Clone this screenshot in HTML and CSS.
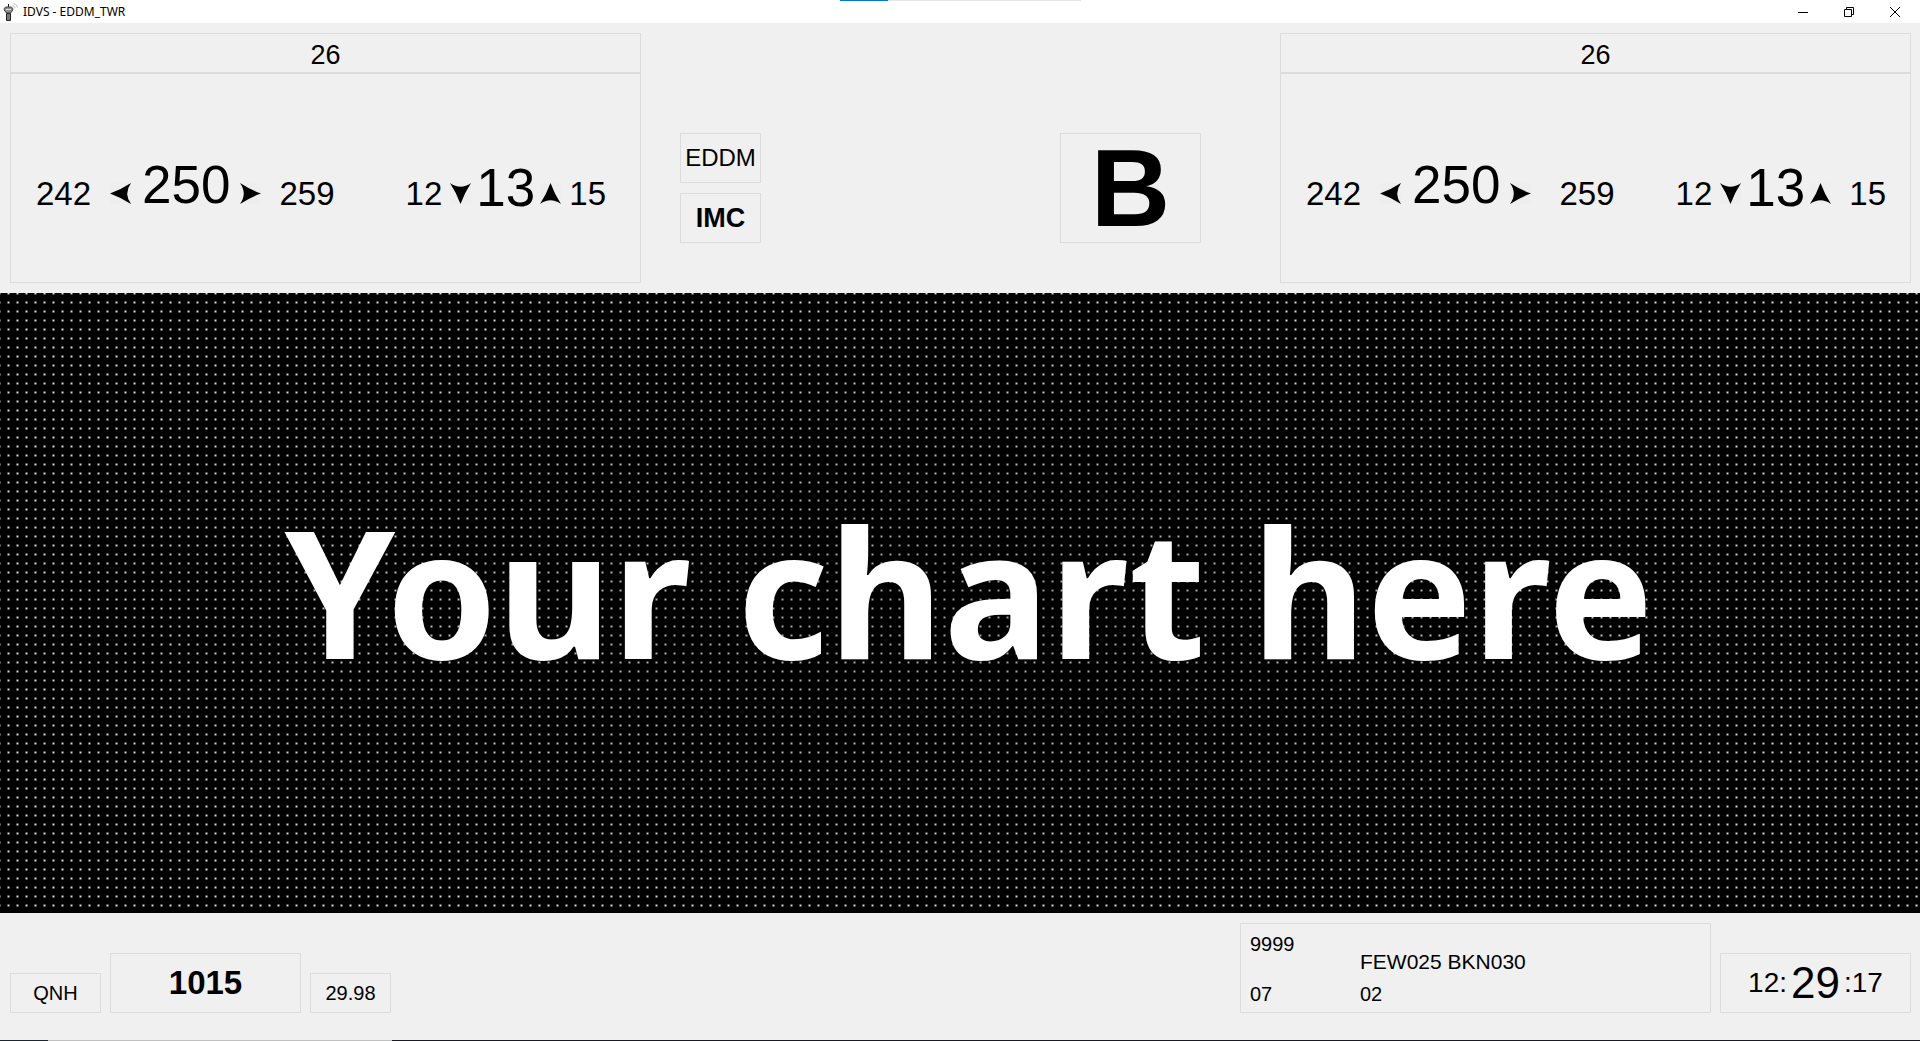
FILE: index.html
```
<!DOCTYPE html>
<html lang="en">
<head>
<meta charset="utf-8">
<meta name="viewport" content="width=device-width, initial-scale=1">
<title>IDVS - EDDM_TWR</title>
<link rel="stylesheet" href="styles.css">
</head>
<body>
<svg width="0" height="0" class="symbols" aria-hidden="true">
  <symbol id="arrow" viewBox="0 0 21 21"><path d="M0 10.500 Q11 6.500 21 0 Q13.500 10.500 21 21 Q11 14.500 0 10.500z"/></symbol>
</svg>

<header class="titlebar">
  <svg class="app-icon" width="16" height="18" viewBox="0 0 16 18" aria-hidden="true">
    <path d="M5 1h1v3H5z" fill="#111"/>
    <path d="M2.500 4h6l1.500 2-1 2.500L7 10H4L2 8.500 1 6z" fill="#8c8c8c" stroke="#444"/>
    <path d="M3 6.500h5" stroke="#ddd"/>
    <path d="M3.500 10.500h4v7h-4z" fill="#777" stroke="#222"/>
    <path d="M9.500 2.500q2 0 2.500 2.500M10.500 .5q3.500 .5 4 4" fill="none" stroke="#bbb"/>
  </svg>
  <h1 class="window-title">IDVS - EDDM_TWR</h1>
  <div class="window-controls">
    <button type="button" class="window-button" aria-label="Minimize"><svg width="10" height="10" viewBox="0 0 10 10"><path d="M0 5.500h10"/></svg></button>
    <button type="button" class="window-button" aria-label="Restore"><svg width="10" height="10" viewBox="0 0 10 10"><path d="M.5 2.500h7v7h-7zM2.500 2.500v-2h7v7h-2"/></svg></button>
    <button type="button" class="window-button" aria-label="Close"><svg width="10" height="10" viewBox="0 0 10 10"><path d="M0 0l10 10M10 0L0 10"/></svg></button>
  </div>
  <div class="load-strip"></div>
</header>

<section class="overview">
  <article class="runway">
    <h2 class="runway-name">26</h2>
    <div class="wind">
      <div class="wind-group">
        <span class="reading">242</span>
        <svg class="arrow arrow-left"><use href="#arrow"/></svg>
        <span class="reading direction">250</span>
        <svg class="arrow arrow-right"><use href="#arrow"/></svg>
        <span class="reading upper">259</span>
      </div>
      <div class="wind-group speed-group">
        <span class="reading">12</span>
        <svg class="arrow arrow-down"><use href="#arrow"/></svg>
        <span class="reading speed">13</span>
        <svg class="arrow arrow-up"><use href="#arrow"/></svg>
        <span class="reading">15</span>
      </div>
    </div>
  </article>

  <div class="station">
    <div class="station-state">
      <div class="box airport">EDDM</div>
      <div class="box conditions">IMC</div>
    </div>
    <div class="box atis">B</div>
  </div>

  <article class="runway runway-wide">
    <h2 class="runway-name">26</h2>
    <div class="wind">
      <div class="wind-group">
        <span class="reading">242</span>
        <svg class="arrow arrow-left"><use href="#arrow"/></svg>
        <span class="reading direction">250</span>
        <svg class="arrow arrow-right"><use href="#arrow"/></svg>
        <span class="reading upper">259</span>
      </div>
      <div class="wind-group speed-group">
        <span class="reading">12</span>
        <svg class="arrow arrow-down"><use href="#arrow"/></svg>
        <span class="reading speed">13</span>
        <svg class="arrow arrow-up"><use href="#arrow"/></svg>
        <span class="reading upper">15</span>
      </div>
    </div>
  </article>
</section>

<main class="chart">
  <p class="chart-text">Your chart here</p>
</main>

<footer class="status">
  <div class="pressure">
    <div class="box unit">QNH</div>
    <div class="box qnh">1015</div>
    <div class="box inches">29.98</div>
  </div>
  <div class="conditions-row">
    <div class="box weather">
      <div class="weather-column weather-first">
        <span>9999</span>
        <span>07</span>
      </div>
      <div class="weather-column">
        <span class="clouds">FEW025 BKN030</span>
        <span>02</span>
      </div>
    </div>
    <time class="box clock" datetime="12:29:17"><span>12:</span><span class="minutes">29</span><span>:17</span></time>
  </div>
</footer>
<div class="taskbar-edge"></div>
</body>
</html>
```
FILE: styles.css
```
* {
  box-sizing: border-box;
}

body {
  margin: 0;
  min-height: 100vh;
  display: flex;
  flex-direction: column;
  background: #f0f0f0;
  color: #000;
  font-family: "Liberation Sans", Arial, sans-serif;
  font-size: 20px;
}

.symbols {
  position: absolute;
}

/* Window frame */
.titlebar {
  position: relative;
  display: flex;
  align-items: center;
  height: 23px;
  padding: 0 2px 0 3px;
  background: #fff;
}

.app-icon {
  margin-right: 4px;
}

.window-title {
  margin: 0;
  font: 12px/22px "Noto Sans", "Open Sans", sans-serif;
}

.window-controls {
  display: flex;
  margin-left: auto;
}

.window-button {
  display: flex;
  align-items: center;
  justify-content: center;
  width: 46px;
  height: 20px;
  padding: 0;
  border: 0;
  background: none;
}

.window-button svg {
  fill: none;
  stroke: #000;
  overflow: visible;
}

.load-strip {
  position: absolute;
  top: 0;
  left: 43.75%;
  width: 241px;
  height: 1px;
  background: linear-gradient(to right, #0078d7 48px, #e5e5e5 48px);
}

/* Runway panels and station data */
.overview {
  display: grid;
  grid-template-columns: 631fr 639fr 631fr;
  padding: 10px 9px 10px 10px;
}

.box {
  display: flex;
  align-items: center;
  justify-content: center;
  border: 1px solid #dcdcdc;
}

.runway-name {
  margin: 0;
  height: 40px;
  border: 1px solid #dcdcdc;
  font-size: 27px;
  font-weight: normal;
  line-height: 42px;
  text-align: center;
}

.wind {
  display: flex;
  align-items: flex-end;
  justify-content: space-between;
  height: 210px;
  padding: 0 34px 70px 25px;
  border: 1px solid #dcdcdc;
}

.wind-group {
  display: flex;
  align-items: flex-end;
  gap: 19px;
}

.speed-group {
  gap: 8px;
}

.reading {
  font-size: 33px;
  line-height: 36px;
}

.direction {
  margin: 0 -10px 0 -8px;
  font-size: 53px;
  line-height: 54px;
}

.speed {
  margin: 0 -3px;
  font-size: 53px;
  line-height: 48px;
}

.arrow {
  width: 21px;
  height: 21px;
  margin-bottom: 8px;
  background: #eee;
}

.arrow-up {
  transform: rotate(90deg);
}

.arrow-right {
  transform: rotate(180deg);
}

.arrow-down {
  transform: rotate(270deg);
}

.runway-wide .wind {
  padding-right: 24px;
}

.runway-wide .upper {
  padding-left: 10px;
}

.station {
  display: flex;
  justify-content: space-between;
  align-items: flex-start;
  padding: 100px 79px 0 39px;
}

.station-state {
  display: grid;
  gap: 10px;
}

.airport,
.conditions {
  width: 81px;
  height: 50px;
  font-size: 24px;
}

.conditions {
  font-size: 27px;
  font-weight: bold;
}

.atis {
  width: 141px;
  height: 110px;
  font-size: 110px;
  font-weight: bold;
  line-height: 1;
}

/* Chart area */
.chart {
  flex: 1;
  display: flex;
  align-items: center;
  justify-content: center;
  padding: 0 0 24px 18px;
  background:
    radial-gradient(ellipse at center, rgba(0, 0, 0, 0.3) 0%, rgba(0, 0, 0, 0) 75%),
    radial-gradient(circle at center, #e0e0e0 0, #666 1px, #000 2px) 4px -4px / 9px 9px,
    #000;
}

.chart-text {
  margin: 0;
  color: #fff;
  font: bold 177px/200px "Noto Sans", "Open Sans", sans-serif;
  text-align: center;
}

/* Status row */
.status {
  display: flex;
  justify-content: space-between;
  align-items: flex-end;
  padding: 10px 9px 27px 10px;
}

.pressure,
.conditions-row {
  display: flex;
  align-items: flex-end;
  gap: 9px;
}

.unit {
  width: 91px;
  height: 40px;
}

.qnh {
  width: 191px;
  height: 60px;
  font-size: 33px;
  font-weight: bold;
}

.inches {
  width: 81px;
  height: 40px;
}

.weather {
  width: 471px;
  height: 90px;
  padding: 8px 9px 6px;
  align-items: stretch;
  justify-content: flex-start;
  line-height: 24px;
}

.weather-column {
  display: flex;
  flex-direction: column;
  justify-content: flex-end;
  gap: 8px;
}

.weather-first {
  width: 110px;
  justify-content: space-between;
}

.clouds {
  font-size: 21px;
}

.clock {
  width: 191px;
  height: 60px;
  gap: 4px;
  font-size: 28px;
}

.minutes {
  font-size: 44px;
}

.taskbar-edge {
  height: 1px;
  background: linear-gradient(to right, #1a2733 48px, #c0c0c0 48px, #c0c0c0 392px, #1a1a26 392px);
}
```
